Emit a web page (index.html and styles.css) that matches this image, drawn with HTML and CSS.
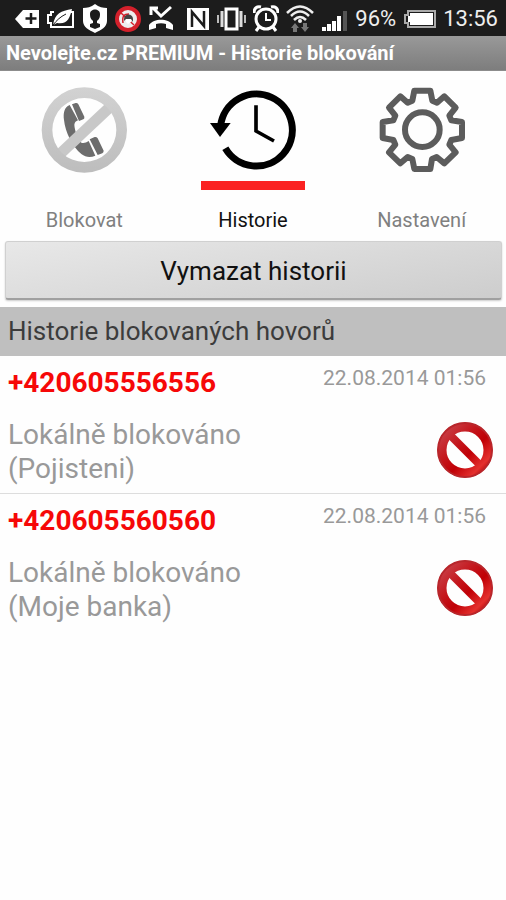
FILE: index.html
```
<!DOCTYPE html>
<html lang="cs">
<head>
  <meta charset="UTF-8">
  <meta name="viewport" content="width=device-width, initial-scale=1">
  <title>Nevolejte.cz PREMIUM - Historie blokování</title>
  <link rel="stylesheet" href="styles.css">
</head>
<body>

<div class="statusbar">
  <svg width="26" height="32" viewBox="0 0 26 32"><path d="M9 9h16v18H9L1 18z" fill="#fff"/><path d="M17 12v11M11.500 17.500h11" stroke="#1c1c1c" stroke-width="2.500"/></svg>
  <svg width="28" height="32" viewBox="0 0 28 32"><path d="M7 11H4v3H1v8h3v4h22V11h-3" fill="none" stroke="#fff" stroke-width="2"/><path d="M6 24C8 12 14 10 25 8c-2 9-5 16-15 14z" fill="#fff"/><path d="M6 24c4-5 7-8 13-11" fill="none" stroke="#1c1c1c"/></svg>
  <svg width="26" height="32" viewBox="0 0 26 32"><path d="M13 3c4 3 8 4 12 4v13c0 6-6 9-12 12C7 29 1 26 1 20V7c4 0 8-1 12-4z" fill="#fff"/><path d="M8 26v-3l3-1v-2c-2-2-3-3-3-7 0-6 10-6 10 0 0 4-1 5-3 7v2l3 1v3l-5 2z" fill="#1c1c1c"/></svg>
  <svg width="26" height="32" viewBox="0 0 26 32"><circle cx="13" cy="18" r="11" fill="#eee" stroke="#d3202b" stroke-width="4"/><path d="M5 11l14 13M8 22c-1-7 1-9 6-9" fill="none" stroke="#d3202b" stroke-width="1.500"/><path d="M9 18c0-6 9-6 9 0v3l-2-3h-5l-2 2z" fill="#444"/><path d="M11 18h5v3l-3 2-2-2z" fill="#fff"/></svg>
  <svg width="26" height="32" viewBox="0 0 26 32"><path d="M5 7l8 8L23 6M3 14V7h7" fill="none" stroke="#fff" stroke-width="3"/><path d="M1 29v-5c5-7 19-7 24 0v5l-7-2v-4c-3-1-7-1-10 0v4z" fill="#fff"/></svg>
  <svg class="system" width="24" height="32" viewBox="0 0 24 32"><path d="M1 7h22v22H1z" fill="#fff"/><path d="M6 26V11l12 14V10" fill="none" stroke="#1c1c1c" stroke-width="2.500"/></svg>
  <svg width="29" height="32" viewBox="0 0 29 32"><path d="M9 8h11v20H9z" fill="none" stroke="#fff" stroke-width="3"/><path d="M5 10v16M24 10v16" stroke="#ddd" stroke-width="3"/><path d="M1 14v8M28 14v8" stroke="#bbb" stroke-width="2"/></svg>
  <svg width="26" height="32" viewBox="0 0 26 32"><circle cx="13" cy="18" r="10" fill="none" stroke="#fff" stroke-width="3"/><path d="M1 12c0-5 3-7 7-6M25 12c0-5-3-7-7-6M6 26l-3 4M20 26l3 4" fill="none" stroke="#fff" stroke-width="3"/><path d="M13 12v7h5" fill="none" stroke="#fff" stroke-width="2"/></svg>
  <svg width="28" height="32" viewBox="0 0 28 32"><path d="M1 12q13-13 26 0M5 15q9-9 18 0M8 19q6-6 12 0" fill="none" stroke="#eee" stroke-width="2.500"/><circle cx="14" cy="20" r="2" fill="#eee"/><path d="M9 22l4 5h-2v4H7v-4H5zM19 31l-4-5h2v-4h4v4h2z" fill="#777"/></svg>
  <svg width="27" height="32" viewBox="0 0 27 32"><path d="M1 26h4v4H1zM6 23h4v7H6zM11 20h4v10h-4zM16 15h4v15h-4z" fill="#fff"/><path d="M22 10h4v20h-4z" fill="#555"/></svg>
  <span>96%</span>
  <svg width="33" height="32" viewBox="0 0 33 32"><path d="M5 10h27v16H5v-4H2v-8h3z" fill="none" stroke="#aaa" stroke-width="2"/><path d="M7 12h23v12H7v-3H5v-6h2z" fill="#fff"/></svg>
  <span>13:56</span>
</div>

<h1 class="titlebar">Nevolejte.cz PREMIUM - Historie blokování</h1>

<nav class="tabs">
  <a class="tab" href="#blokovat">
    <svg class="tab-icon" viewBox="118 45 270 270">
      <defs>
        <linearGradient id="ring" x1="0" y1="0" x2="0" y2="1">
          <stop offset="0" stop-color="#d2d2d2"/>
          <stop offset="1" stop-color="#bdbdbd"/>
        </linearGradient>
      </defs>
      <path d="M210 105c-16 6-20 25-17 45 4 37 25 80 52 102 14 11 28 11 42 5l-20-44c-7 5-15 7-22 5-12-13-20-37-21-54 1-7 5-11 11-13z" fill="#6d6d6d"/>
      <path d="M217 103l11-4q5-1 8 4l18 37q1 6-3 8l-13 5zM270 208l15-7q6-1 9 4l18 37q0 5-4 8l-14 5z" fill="#6d6d6d"/>
      <path d="M184 249L331 111" stroke="#c8c8c8" stroke-width="33"/>
      <path fill-rule="evenodd" d="M254 52a128 128 0 1 1 0 256a128 128 0 1 1 0-256zM254 84a96 96 0 1 0 0 192a96 96 0 1 0 0-192z" fill="url(#ring)"/>
    </svg>
    <span class="tab-line"></span>
    <span class="tab-label">Blokovat</span>
  </a>
  <a class="tab active" href="#historie">
    <svg class="tab-icon" viewBox="114 45 270 270">
      <path d="M152 166a108 108 0 1 1 14 69" fill="none" stroke="#000" stroke-width="21"/>
      <path d="M120 159h62l-32 42z"/>
      <path d="M258 106v77l54 30" fill="none" stroke="#000" stroke-width="11"/>
    </svg>
    <span class="tab-line"></span>
    <span class="tab-label">Historie</span>
  </a>
  <a class="tab" href="#nastaveni">
    <svg class="tab-icon" viewBox="122 45 270 270">
      <g fill="none" stroke="#5c5c5c" stroke-width="18" stroke-linejoin="round">
        <path d="M234 62h48l6 30 14 6 22-19 34 34-19 24 6 14 32 5v48l-32 6-6 14 19 23-34 33-23-19-14 6-5 30h-48l-6-30-14-6-22 19-34-33 19-23-6-14-32-6v-48l32-5 6-14-19-24 34-34 22 19 14-6z"/>
        <circle cx="258" cy="179" r="52"/>
      </g>
    </svg>
    <span class="tab-line"></span>
    <span class="tab-label">Nastavení</span>
  </a>
</nav>

<button class="clear" type="button">Vymazat historii</button>

<h2 class="section-title">Historie blokovaných hovorů</h2>

<ul class="calls">
  <li class="call">
    <div class="call-head">
      <strong class="number">+420605556556</strong>
      <time class="date" datetime="2014-08-22T01:56">22.08.2014 01:56</time>
    </div>
    <div class="call-body">
      <p class="reason">Lokálně blokováno<br>(Pojisteni)</p>
      <svg class="blocked" viewBox="0 0 58 58">
        <defs>
          <linearGradient id="red" gradientUnits="userSpaceOnUse" x1="8" y1="8" x2="50" y2="50">
            <stop offset="0" stop-color="#c94047"/>
            <stop offset=".35" stop-color="#c4161c"/>
            <stop offset=".6" stop-color="#c00006"/>
            <stop offset=".88" stop-color="#e4302e"/>
            <stop offset="1" stop-color="#b90808"/>
          </linearGradient>
        </defs>
        <circle cx="29" cy="29" r="23" fill="none" stroke="url(#red)" stroke-width="9"/>
        <path d="M14 14l30 30" stroke="url(#red)" stroke-width="8"/>
        <circle cx="29" cy="29" r="27" fill="none" stroke="#b8262b" stroke-width="2"/>
      </svg>
    </div>
  </li>
  <li class="call">
    <div class="call-head">
      <strong class="number">+420605560560</strong>
      <time class="date" datetime="2014-08-22T01:56">22.08.2014 01:56</time>
    </div>
    <div class="call-body">
      <p class="reason">Lokálně blokováno<br>(Moje banka)</p>
      <svg class="blocked" viewBox="0 0 58 58">
        <circle cx="29" cy="29" r="23" fill="none" stroke="url(#red)" stroke-width="9"/>
        <path d="M14 14l30 30" stroke="url(#red)" stroke-width="8"/>
        <circle cx="29" cy="29" r="27" fill="none" stroke="#b8262b" stroke-width="2"/>
      </svg>
    </div>
  </li>
</ul>

</body>
</html>
```
FILE: styles.css
```
* {
  box-sizing: border-box;
}
body {
  margin: 0;
  font-family: Roboto, Arial, sans-serif;
  background: #fefefe;
  color: #111;
}
.statusbar {
  display: flex;
  align-items: center;
  justify-content: flex-end;
  gap: 7px;
  height: 36px;
  padding: 0 8px;
  background: #1c1c1c;
  color: #eee;
  font-size: 22px;
  white-space: nowrap;
}
.statusbar svg {
  flex: none;
  margin-top: -2px;
}
.statusbar .system {
  margin-left: 5px;
}
.titlebar {
  margin: 0;
  padding: 0 6px;
  font-size: 20px;
  font-weight: bold;
  line-height: 34px;
  color: #fff;
  background: linear-gradient(#999, #7d7d7d);
  border-bottom: 1px solid #8c8c8c;
}
.tabs {
  display: grid;
  grid-template-columns: repeat(3, 1fr);
  padding-top: 14px;
}
.tab {
  display: flex;
  flex-direction: column;
  align-items: center;
  color: #808080;
  text-decoration: none;
}
.tab-icon {
  width: 90px;
  height: 90px;
}
.tab-line {
  width: 104px;
  height: 9px;
  margin: 6px 0 15px;
}
.tab-label {
  font-size: 20px;
  line-height: 30px;
}
.active {
  color: #111;
}
.active .tab-line {
  background: #fb2222;
}
.clear {
  display: block;
  width: calc(100% - 9px);
  height: 59px;
  margin: 6px 4px 7px 5px;
  padding: 2px 0 0;
  border: 1px solid #d0d0d0;
  border-bottom: 2px solid #a0a0a0;
  border-radius: 3px;
  background: linear-gradient(170deg, #e8e8e8, #cdcdcd);
  box-shadow: 0 1px 2px rgba(0,0,0,0.2);
  font-family: inherit;
  font-size: 26px;
  color: #111;
}
.section-title {
  margin: 0;
  padding: 0 8px;
  font-size: 26px;
  font-weight: normal;
  line-height: 49px;
  color: #3c3c3c;
  background: #bfbfbf;
}
.calls {
  margin: 0;
  padding: 0;
  list-style: none;
}
.call {
  padding: 8px 8px 7px;
}
.call + .call {
  border-top: 1px solid #ddd;
}
.call-head,
.call-body {
  display: flex;
  justify-content: space-between;
}
.call-head {
  padding-right: 12px;
  margin-bottom: 16px;
}
.number {
  font-size: 28px;
  line-height: 38px;
  color: #f60808;
}
.date {
  font-size: 21px;
  line-height: 28px;
  color: #999;
}
.call-body {
  align-items: flex-start;
  padding-right: 4px;
}
.reason {
  margin: 0;
  font-size: 28px;
  line-height: 34px;
  color: #999;
}
.blocked {
  width: 58px;
  height: 58px;
  margin-top: 3px;
}
```
